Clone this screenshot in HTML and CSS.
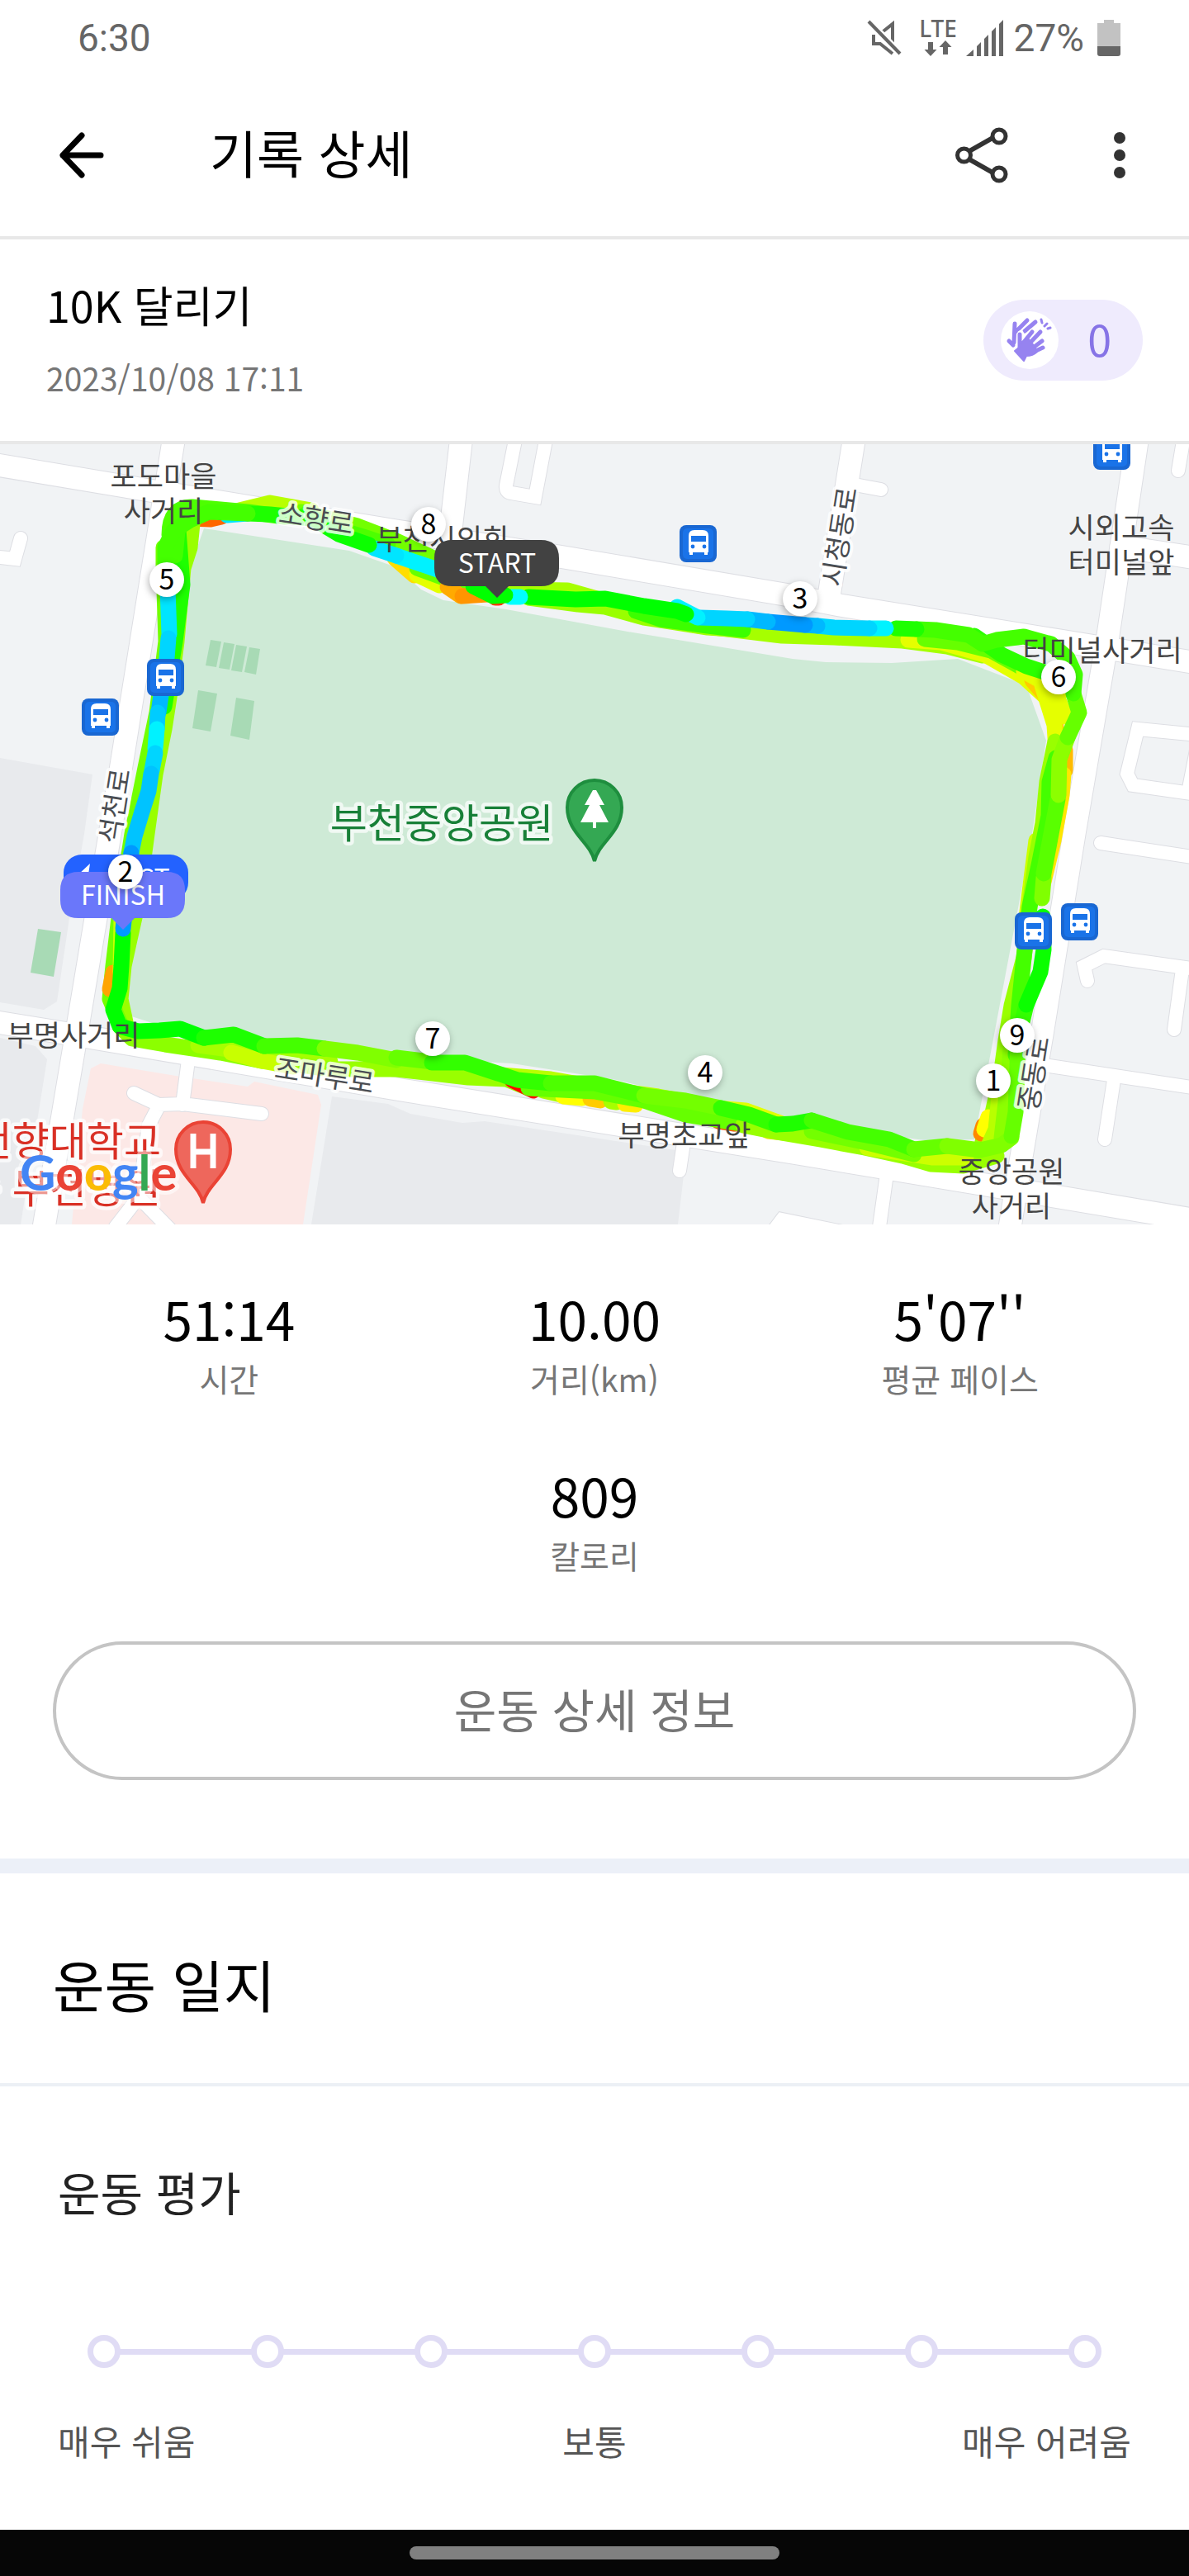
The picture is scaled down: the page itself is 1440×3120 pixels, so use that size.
FILE: index.html
```html
<!DOCTYPE html>
<html lang="ko">
<head>
    <meta charset="UTF-8">
    <meta name="viewport" content="width=device-width, initial-scale=1.0">
    <title>기록 상세</title>
    <link rel="stylesheet" href="styles.css">
</head>
<body>
    <div class="status-bar">
        <span class="status-time">6:30</span>
        <div class="status-icons">
            <svg class="icon-mute" width="42" height="44" viewBox="0 0 42 44" fill="none" stroke="#666" stroke-width="4">
                <path d="M19 14.500L31 5V30L16 15M8 18V29H16L31 41"/>
                <path d="M2 2L40 41" stroke="#fff" stroke-width="9"/>
                <path d="M2 2L40 41"/>
            </svg>
            <svg class="icon-lte" width="46" height="46" viewBox="0 0 46 46" fill="#666">
                <text class="lte-text" x="23" y="22" text-anchor="middle">LTE</text>
                <path d="M11 28H17V37H21.500L14 45L6.500 37H11ZM29 43V34H24.500L32 26L39.500 34H35V43Z"/>
            </svg>
            <svg class="icon-signal" width="46" height="44" viewBox="0 0 46 44" fill="#666">
                <path d="M0 44L9 36V44ZM13 44V32L18 27V44ZM22 44V23L27 18V44ZM31 44V14L36 9V44ZM40 44V5L45 0V44Z"/>
            </svg>
            <span class="status-battery">27%</span>
            <svg width="28" height="44" viewBox="0 0 28 44">
                <path d="M8 0H20V4H28V32H0V4H8Z" fill="#c2c2c2"/>
                <path d="M0 32H28V41Q28 44 25 44H3Q0 44 0 41Z" fill="#666"/>
            </svg>
        </div>
    </div>

    <header class="app-bar">
        <button class="icon-button" type="button" aria-label="뒤로">
            <svg width="54" height="56" viewBox="0 0 54 56" fill="none" stroke="#000" stroke-width="7" stroke-linecap="round" stroke-linejoin="round">
                <path d="M27 4L4 28L27 52M4 28H50"/>
            </svg>
        </button>
        <h1>기록 상세</h1>
        <button class="icon-button" type="button" aria-label="공유">
            <svg width="64" height="68" viewBox="0 0 64 68" fill="none" stroke="#333" stroke-width="5">
                <path d="M17 29L47 12M17 39L47 56" stroke-width="6"/>
                <circle cx="10.500" cy="34" r="8"/>
                <circle cx="53" cy="11" r="8"/>
                <circle cx="53" cy="57" r="8"/>
            </svg>
        </button>
        <button class="icon-button more" type="button" aria-label="더보기">
            <svg width="14" height="56" viewBox="0 0 14 56" fill="#333">
                <circle cx="7" cy="7" r="7"/>
                <circle cx="7" cy="28" r="7"/>
                <circle cx="7" cy="49" r="7"/>
            </svg>
        </button>
    </header>

    <main>
        <section class="summary">
            <div>
                <h2>10K 달리기</h2>
                <p>2023/10/08 17:11</p>
            </div>
            <button class="clap" type="button">
                <span class="clap-icon">
                    <svg width="70" height="70" viewBox="0 0 70 70" fill="none" stroke="#9683f0" stroke-linecap="round" stroke-linejoin="round">
                        <path d="M17 15L16 38M10 36L15 41M19 24L32 11M29 24L42 13" stroke-width="5"/>
                        <path d="M49 10L50 14M56 15L53 18M60 20L57 21" stroke-width="3"/>
                        <path d="M24 27L23 44L18 48L28 59L32 54Q42 54 47 49L51 44L45 47L50 36L42 38L48 25L36 34L38 25L27 38Z" fill="#9683f0" stroke="#fff" stroke-width="8"/>
                        <path d="M23 28V46M24 42L38 25M30 44L48 25M34 48L50 36M36 51L51 44" stroke-width="5"/>
                        <path d="M24 40L33 33L42 44L44 49Q39 54 31 54L28 60L17 48L22 44Z" fill="#9683f0" stroke-width="2"/>
                    </svg>
                </span>
                <span>0</span>
            </button>
        </section>

        <svg class="map" viewBox="0 0 1440 945" role="img" aria-label="달리기 경로 지도">
            <defs>
                <g id="bus">
                    <rect width="45" height="45" rx="8" fill="#1967d2"/>
                    <rect x="4" y="4" width="37" height="37" rx="5" fill="#1a73e8"/>
                    <path d="M11 13Q11 6 18 6H28Q35 6 35 13V33H34V36H30V33H16V36H12V33H11Z" fill="#fff"/>
                    <path d="M14 13H32V20H14Z" fill="#1a73e8"/>
                    <circle cx="16" cy="26" r="2.400" fill="#1a73e8"/>
                    <circle cx="30" cy="26" r="2.400" fill="#1a73e8"/>
                </g>
                <g id="roads">
                    <path class="wide" d="M-10 24L187 57L480 105L677 136L950 182L1017 195L1327 245L1450 265"/>
                    <path class="wide" d="M211 -10L198 71L147 389L95 700L52 955"/>
                    <path class="wide" d="M-10 699L95 716L480 781L960 858L1230 903L1450 940"/>
                    <path class="wide" d="M1035 -10L1003 190"/>
                    <path class="wide" d="M1378 -10L1341 238L1301 472L1262 715L1232 893L1222 955"/>
                    <path class="wide" d="M1358 124L1450 138"/>
                    <path class="wide" d="M559 -10L545 112"/>
                    <path class="narrow" d="M1035 49L1067 55M1434 -10L1427 32M1333 483L1450 501M1317 650L1313 632L1337 620L1450 636M1432 636L1422 709M1264 752L1450 780M1349 770L1338 842M1074 884L1064 955M828 846L823 880M25 114L18 139L-10 136M625 -10L613 50Q612 58 619 59L648 64L662 -10M1450 352L1378 345L1365 399L1372 413L1450 424M1453 350L1439 422M935 955L947 939L1020 954"/>
                    <path class="narrow" d="M228 746L221 800M162 786L192 800L221 799L317 811M192 802L180 825L168 912L140 948M168 912L207 952"/>
                </g>
            </defs>

            <rect width="1440" height="945" fill="#f1f3f5"/>

            <!-- blocks -->
            <g fill="#e8eaed">
                <path d="M0 380L112 400L102 472L84 574L69 675L53 685L0 676Z"/>
                <path d="M0 719L43 729L57 745L25 945H0Z"/>
                <path d="M402 790L470 799L497 811L560 822L587 820L818 855L828 885L821 945H377Z"/>
            </g>
            <path d="M110 756L122 750L213 765L300 778L308 772L385 788L389 800L367 945H87L100 805Z" fill="#fce8e6"/>

            <use href="#roads" class="road-edge"/>
            <use href="#roads" class="road"/>

            <!-- park -->
            <path d="M247 102L423 129L480 149L510 176L537 189L613 200L760 227L960 260L1000 264L1080 265L1160 260L1243 292L1267 359L1250 472L1180 842L1127 844L960 822L747 770L620 750L480 742L200 706L150 690L165 520L205 330L230 150Z" fill="#ceead6"/>
            <g fill="#a8dab5">
                <path d="M255 237L268 239L262 270L249 268ZM271 240L284 242L278 273L265 271ZM286 243L299 245L293 276L280 274ZM302 246L315 248L310 279L296 276Z"/>
                <path d="M240 298L263 302L255 348L233 344ZM286 307L308 311L302 358L279 353ZM46 587L74 591L65 645L37 640Z"/>
            </g>

            <!-- route, older laps first -->
            <g class="route">
                <path stroke="#ff6600" d="M230 90L255 91L268 88"/>
                <path stroke="#00e5ff" d="M275 86L300 84"/>
                <path stroke="#99ff00" d="M233 96L230 125L222 150L214 239L206 300L199 345L188 400L178 472L166 560L157 600L150 632L146 672L152 700"/>
                <path stroke="#73ff00" d="M198 125L198 145L201 239L190 325L176 392L160 472L144 574L137 632L133 672L145 700"/>
                <path stroke="#ffa500" d="M137 640L133 660"/>
                <path stroke="#ccff00" d="M147 574L146 640"/>
                <path stroke="#1eff00" d="M215 90L221 170L212 239L199 318"/>
                <path stroke="#44ff00" d="M216 95L212 135"/>
                <path stroke="#b8ff00" d="M290 80L327 71L377 80"/>
                <path stroke="#4dff00" d="M205 110Q205 75 233 76L300 82L345 88"/>
                <path stroke="#73ff00" d="M365 82L433 99L480 117L523 137L573 162"/>
                <path stroke="#4dff00" d="M370 85L400 100L440 112L470 122"/>
                <path stroke="#ffdd00" d="M478 138L502 159"/>
                <path stroke="#e5ff00" d="M505 158L532 171"/>
                <path stroke="#66ff00" d="M505 150L560 170"/>
                <path stroke="#ffaa00" d="M542 173L558 184"/>
                <path stroke="#ff9500" d="M560 184L590 182"/>
                <path stroke="#ff3300" d="M600 186L604 186"/>
                <path stroke="#a6ff00" d="M590 179L630 176L687 177L740 192"/>
                <path stroke="#99ff00" d="M640 186L700 194L733 197L780 210L857 222L900 225"/>
                <path stroke="#a6ff00" d="M840 219L947 232L1010 234L1093 238L1147 245L1190 256"/>
                <path stroke="#e5ff00" d="M1100 237L1140 240L1193 255L1240 282L1265 305"/>
                <path stroke="#66ff00" d="M1120 236L1160 240L1200 250L1240 272"/>
                <path stroke="#3cff00" d="M770 202L800 212L857 220L900 225"/>
                <path stroke="#ffcc00" d="M1250 286L1275 315L1280 350"/>
                <path stroke="#e5ff00" d="M1262 292L1277 340L1279 370M1278 300L1290 330M1240 275L1285 300"/>
                <path stroke="#ffbb00" d="M1290 370L1290 395"/>
                <path stroke="#ffe600" d="M1288 400L1286 425L1276 480L1264 530"/>
                <path stroke="#ccff00" d="M1255 480L1246 550L1240 600"/>
                <path stroke="#99ff00" d="M1278 360L1268 409L1263 459L1255 500L1247 560L1240 622L1225 680L1218 722L1212 765L1202 810L1190 845"/>
                <path stroke="#ff8800" d="M1191 825L1188 835"/>
                <path stroke="#ffff00" d="M1197 815L1192 830"/>
                <path stroke="#b8ff00" d="M1213 760L1206 830L1197 850"/>
                <path stroke="#8cff00" d="M1225 720L1220 780L1213 840"/>
                <path stroke="#44ff00" d="M1279 380L1271 409L1270 450L1258 510L1247 560L1240 622L1234 680L1230 740"/>
                <path stroke="#8cff00" d="M145 705L160 720L200 727L267 737L317 747"/>
                <path stroke="#a6ff00" d="M240 728L300 736L400 748"/>
                <path stroke="#c8ff00" d="M280 737L317 747L355 754"/>
                <path stroke="#99ff00" d="M350 750L400 757L480 757L567 767L613 769L640 780"/>
                <path stroke="#ff0000" d="M620 770L646 783"/>
                <path stroke="#a6ff00" d="M658 783L680 788"/>
                <path stroke="#ffff00" d="M682 790L705 792"/>
                <path stroke="#ffcc00" d="M715 793L727 795"/>
                <path stroke="#a6ff00" d="M740 796L747 797"/>
                <path stroke="#ffee00" d="M757 799L770 800"/>
                <path stroke="#b8ff00" d="M607 764L667 769L747 783L797 790L850 800"/>
                <path stroke="#e1ff00" d="M830 801L903 807L947 823"/>
                <path stroke="#ff5500" d="M870 820L890 823"/>
                <path stroke="#ffdd00" d="M930 832L970 836"/>
                <path stroke="#66ff00" d="M640 780L720 784L780 795L830 812L880 820L940 830"/>
                <path stroke="#99ff00" d="M900 825L940 833L993 842L1047 852L1093 862L1127 872L1167 874L1207 862"/>
                <path stroke="#ccff00" d="M1050 852L1130 864L1170 864"/>
                <path stroke="#73ff00" d="M983 832L1050 846L1107 860"/>

                <!-- latest lap -->
                <path stroke="#00ff00" d="M149 592L147 632L145 659L137 685L145 705L167 711L193 710L218 708L247 719"/>
                <path stroke="#1eff00" d="M247 719L283 715L320 729"/>
                <path stroke="#44ff00" d="M320 729L360 728L393 732"/>
                <path stroke="#80ff00" d="M393 732L433 737L480 746"/>
                <path stroke="#66ff00" d="M480 743L523 748"/>
                <path stroke="#33ff00" d="M523 749L563 749L627 770L667 774"/>
                <path stroke="#4dff00" d="M667 774L720 774L780 789"/>
                <path stroke="#73ff00" d="M780 789L830 795L873 804"/>
                <path stroke="#33ff00" d="M873 804L907 812L940 824"/>
                <path stroke="#1eff00" d="M940 824L960 823L983 819"/>
                <path stroke="#44ff00" d="M983 819L1027 833L1077 842L1107 854"/>
                <path stroke="#66ff00" d="M1107 854L1147 850"/>
                <path stroke="#80ff00" d="M1147 850L1187 855L1213 849L1225 840"/>
                <path stroke="#66ff00" d="M1225 838L1230 809L1232 755L1233 720"/>
                <path stroke="#33ff00" d="M1233 720L1243 679"/>
                <path stroke="#0bff00" d="M1243 679L1260 639L1264 612L1263 572"/>
                <path stroke="#80ff00" d="M1262 550L1264 525"/>
                <path stroke="#59ff00" d="M1264 520L1273 472L1281 430"/>
                <path stroke="#8cff00" d="M1282 425L1283 382L1293 355"/>
                <path stroke="#66ff00" d="M1293 355L1307 325L1300 302"/>
                <path stroke="#2bff00" d="M1180 232L1213 255L1243 269L1277 280"/>
                <path stroke="#44ff00" d="M1300 302L1302 279L1293 259L1273 242L1240 233L1207 237L1190 242L1173 231L1133 225L1110 224"/>
                <path stroke="#1eff00" d="M1110 224L1085 223"/>
                <path stroke="#00f2ff" d="M1073 223L1053 223"/>
                <path stroke="#00d5ff" d="M1053 223L1010 222L990 220"/>
                <path stroke="#00b8ff" d="M990 220L975 219"/>
                <path stroke="#0099ff" d="M975 219L953 217L930 215"/>
                <path stroke="#00b8ff" d="M930 215L905 212"/>
                <path stroke="#00d5ff" d="M905 212L880 211L847 210"/>
                <path stroke="#00f2ff" d="M845 210L820 197"/>
                <path stroke="#00ff00" d="M831 206L820 202L780 196L733 187L697 188L640 185"/>
                <path stroke="#00ffff" d="M630 185L618 185"/>
                <path stroke="#00ff00" d="M612 183L597 184L573 172"/>
                <path stroke="#00f2ff" d="M530 152L480 135"/>
                <path stroke="#00e5ff" d="M480 135L453 126"/>
                <path stroke="#0bff00" d="M447 122L410 109L377 89"/>
                <path stroke="#1eff00" d="M377 90L327 85L300 84"/>
                <path stroke="#44ff00" d="M300 84L253 82L230 92L210 105L200 125L200 150"/>
                <path stroke="#00e5ff" d="M203 175L205 230"/>
                <path stroke="#00d5ff" d="M204 235L202 259L197 290"/>
                <path stroke="#00b8ff" d="M197 290L192 325"/>
                <path stroke="#00ccff" d="M191 325L190 345"/>
                <path stroke="#00f2ff" d="M190 345L188 369"/>
                <path stroke="#00d5ff" d="M188 374L184 395"/>
                <path stroke="#00c3ff" d="M183 399L180 420L172 445L163 475L159 495"/>
                <path stroke="#0099ff" d="M159 495L149 587"/>
            </g>

            <use href="#bus" x="1324" y="-14"/>
            <use href="#bus" x="823" y="98"/>
            <use href="#bus" x="178" y="260"/>
            <use href="#bus" x="99" y="308"/>
            <use href="#bus" x="1229" y="567"/>
            <use href="#bus" x="1285" y="556"/>

            <!-- place names -->
            <g class="place">
                <text x="198" y="52">포도마을</text>
                <text x="198" y="94">사거리</text>
                <text x="536" y="128">부천시의회</text>
                <text x="1358" y="114">시외고속</text>
                <text x="1358" y="156">터미널앞</text>
                <text x="1335" y="263">터미널사거리</text>
                <text x="89" y="729">부명사거리</text>
                <text x="829" y="850">부명초교앞</text>
                <text x="1225" y="894">중앙공원</text>
                <text x="1225" y="936">사거리</text>
            </g>
            <g class="street">
                <text transform="translate(383 90) rotate(9)" dy="12">소향로</text>
                <text transform="translate(393 765) rotate(9)" dy="12">조마루로</text>
                <text transform="translate(139 438) rotate(-81)" dy="12">석천로</text>
                <text transform="translate(1017 112) rotate(-81)" dy="12">시청동로</text>
                <text transform="translate(1252 762) rotate(-81)" dy="12">중동로</text>
            </g>
            <text class="poi park" x="535" y="477">부천중앙공원</text>
            <text class="poi hospital" x="195" y="862">순천향대학교</text>
            <text class="poi hospital" x="195" y="919">부속 부천병원</text>

            <path d="M720 505C715 482 687 471 687 440A33 33 0 0 1 753 440C753 471 725 482 720 505Z" fill="#34a853" stroke="#1e8e3e" stroke-width="4"/>
            <path d="M718 419H722L732 437H726L737 458H722V465H718V458H703L714 437H708Z" fill="#fff"/>
            <path d="M246 919C241 896 213 885 213 854A33 33 0 0 1 279 854C279 885 251 896 246 919Z" fill="#ee675c" stroke="#ea4335" stroke-width="4"/>
            <path d="M234 835V877M258 835V877M234 857H258" stroke="#fff" stroke-width="7"/>

            <text class="google" x="24" y="904"><tspan fill="#4285f4">G</tspan><tspan fill="#ea4335">o</tspan><tspan fill="#fbbc04">o</tspan><tspan fill="#4285f4">g</tspan><tspan fill="#34a853">l</tspan><tspan fill="#ea4335">e</tspan></text>

            <!-- kilometre markers -->
            <g class="marker">
                <circle cx="202" cy="164" r="21"/><text x="202" y="176">5</text>
                <circle cx="519" cy="97" r="21"/><text x="519" y="109">8</text>
                <circle cx="969" cy="187" r="21"/><text x="969" y="199">3</text>
                <circle cx="1282" cy="282" r="21"/><text x="1282" y="294">6</text>
                <circle cx="1232" cy="716" r="21"/><text x="1232" y="728">9</text>
                <circle cx="1203" cy="771" r="21"/><text x="1203" y="783">1</text>
                <circle cx="524" cy="720" r="21"/><text x="524" y="732">7</text>
                <circle cx="854" cy="761" r="21"/><text x="854" y="773">4</text>
            </g>
            <g class="bubble">
                <path d="M548 116H655Q677 116 677 138V150Q677 172 655 172H616L602 186L588 172H548Q526 172 526 150V138Q526 116 548 116Z" fill="#424242"/>
                <text x="602" y="156">START</text>
                <rect x="77" y="497" width="151" height="56" rx="22" fill="#2362ff"/>
                <path d="M109 508L94 522H101L96 537L111 521H107Z" fill="#fff"/>
                <text x="167" y="538">BEST</text>
                <path d="M95 518H202Q224 518 224 540V552Q224 574 202 574H163L149 588L135 574H95Q73 574 73 552V540Q73 518 95 518Z" fill="#6a77fa"/>
                <text x="149" y="558">FINISH</text>
            </g>
            <g class="marker">
                <circle cx="152" cy="518" r="21"/><text x="152" y="530">2</text>
            </g>
        </svg>

        <section class="stats">
            <div class="stat">
                <strong>51:14</strong>
                <span>시간</span>
            </div>
            <div class="stat">
                <strong>10.00</strong>
                <span>거리(km)</span>
            </div>
            <div class="stat">
                <strong>5'07''</strong>
                <span>평균 페이스</span>
            </div>
            <div class="stat">
                <strong>809</strong>
                <span>칼로리</span>
            </div>
        </section>

        <button class="detail-button" type="button">운동 상세 정보</button>

        <section class="journal">
            <h2>운동 일지</h2>
            <div class="rating">
                <h3 id="ratingTitle">운동 평가</h3>
                <div class="rating-scale" role="radiogroup" aria-labelledby="ratingTitle">
                    <input type="radio" name="rating" id="rate1" value="1">
                    <input type="radio" name="rating" id="rate2" value="2" aria-label="2">
                    <input type="radio" name="rating" id="rate3" value="3" aria-label="3">
                    <input type="radio" name="rating" id="rate4" value="4">
                    <input type="radio" name="rating" id="rate5" value="5" aria-label="5">
                    <input type="radio" name="rating" id="rate6" value="6" aria-label="6">
                    <input type="radio" name="rating" id="rate7" value="7">
                </div>
                <div class="rating-labels">
                    <label for="rate1">매우 쉬움</label>
                    <label for="rate4">보통</label>
                    <label for="rate7">매우 어려움</label>
                </div>
            </div>
        </section>
    </main>

    <footer class="nav-bar">
        <div class="nav-handle"></div>
    </footer>
</body>
</html>
```
FILE: styles.css
```css
:root {
    --text-color: #000;
    --muted-color: #767676;
    --line-color: #e8e8e8;
    --accent-color: #8673e6;
    --accent-soft: #efebfd;
    --scale-color: #e0dcf5;
}

* {
    margin: 0;
    padding: 0;
    box-sizing: border-box;
}

body {
    font-family: 'Noto Sans CJK KR', sans-serif;
    color: var(--text-color);
    background-color: #fff;
    display: flex;
    flex-direction: column;
    min-height: 100vh;
}

h1, h2, h3 {
    font-weight: normal;
}

button {
    font-family: inherit;
    border: none;
    background: none;
    cursor: pointer;
}

svg {
    display: block;
}

/* status bar */
.status-bar {
    display: flex;
    align-items: center;
    justify-content: space-between;
    height: 90px;
    padding: 2px 83px 0 94px;
    font-family: Roboto, sans-serif;
    font-size: 46px;
    color: #666;
}

.status-icons {
    display: flex;
    align-items: center;
}

.icon-lte {
    margin: 0 11px 0 21px;
}

.icon-signal {
    margin-right: 12px;
}

.status-battery {
    margin-right: 16px;
}

.lte-text {
    font-family: 'Noto Sans', sans-serif;
    font-size: 28px;
    font-weight: 500;
}

/* app bar */
.app-bar {
    display: flex;
    align-items: center;
    height: 200px;
    padding: 0 77px 0 72px;
    border-bottom: 4px solid var(--line-color);
}

.app-bar h1 {
    flex-grow: 1;
    margin-left: 128px;
    padding-bottom: 8px;
    font-size: 62px;
    line-height: 92px;
}

.icon-button.more {
    margin-left: 128px;
}

/* summary */
.summary {
    display: flex;
    align-items: center;
    justify-content: space-between;
    height: 248px;
    padding: 0 56px;
    border-bottom: 4px solid var(--line-color);
}

.summary h2 {
    font-size: 52px;
    line-height: 80px;
    margin-bottom: 18px;
}

.summary p {
    padding-bottom: 8px;
    font-size: 39px;
    line-height: 60px;
    color: var(--muted-color);
}

.clap {
    display: flex;
    align-items: center;
    gap: 35px;
    height: 98px;
    padding: 0 38px 0 21px;
    border-radius: 49px;
    background-color: var(--accent-soft);
    color: var(--accent-color);
    font-size: 52px;
    line-height: 76px;
}

.clap span:last-child {
    padding-bottom: 4px;
}

.clap-icon {
    border-radius: 50%;
    background-color: #fff;
}

/* map */
.map {
    width: 100%;
    height: auto;
}

.road-edge {
    --wide: 29px;
    --narrow: 18px;
    fill: none;
    stroke: #dddee3;
    stroke-linecap: round;
}

.road {
    --wide: 27px;
    --narrow: 16px;
    fill: none;
    stroke: #fff;
    stroke-linecap: round;
}

.wide {
    stroke-width: var(--wide);
}

.narrow {
    stroke-width: var(--narrow);
}

.route {
    fill: none;
    stroke-width: 19px;
    stroke-linecap: round;
    stroke-linejoin: round;
}

.map text {
    text-anchor: middle;
    paint-order: stroke;
    stroke-linejoin: round;
}

.map .place {
    font-size: 35px;
    fill: #444;
}

.map .street {
    font-size: 33px;
    fill: #4a4d52;
    stroke: rgba(255, 255, 255, 0.8);
    stroke-width: 8px;
}

.map .poi {
    font-size: 49px;
    stroke: rgba(255, 255, 255, 0.7);
    stroke-width: 9px;
}

.map .park {
    fill: #188038;
}

.map .hospital {
    fill: #d93025;
    text-anchor: end;
}

.map .google {
    font-family: Lato, sans-serif;
    font-size: 60px;
    font-weight: bold;
    text-anchor: start;
    stroke: rgba(255, 255, 255, 0.5);
    stroke-width: 10px;
}

.marker {
    font-size: 34px;
}

.marker circle {
    fill: #fff;
    filter: drop-shadow(-1px 3px 4px rgba(0, 0, 0, 0.3));
}

.bubble {
    font-size: 32px;
}

.bubble text {
    fill: #fff;
}

/* stats */
.stats {
    display: flex;
    flex-wrap: wrap;
    justify-content: center;
    row-gap: 68px;
    padding: 68px 56px 77px;
}

.stat {
    display: flex;
    flex-direction: column;
    align-items: center;
    width: 33.333%;
}

.stat strong {
    font-size: 64px;
    font-weight: normal;
    line-height: 90px;
}

.stat span {
    font-size: 39px;
    line-height: 56px;
    color: var(--muted-color);
}

.detail-button {
    display: block;
    width: calc(100% - 128px);
    height: 168px;
    margin: 0 64px 95px;
    padding-bottom: 8px;
    border: 4px solid #c4c4c4;
    border-radius: 84px;
    font-size: 56px;
    color: var(--muted-color);
}

/* journal */
.journal {
    border-top: 18px solid #ecf0f8;
}

.journal h2 {
    padding: 84px 64px 70px;
    border-bottom: 4px solid #ecf0f5;
    font-size: 68px;
    line-height: 100px;
}

.rating {
    padding: 87px 70px 78px;
}

.rating h3 {
    font-size: 56px;
    line-height: 80px;
    color: #222;
}

.rating-scale {
    display: flex;
    justify-content: space-between;
    margin: 134px 36px 58px;
    background: linear-gradient(var(--scale-color), var(--scale-color)) center / calc(100% - 40px) 7px no-repeat;
}

.rating-scale input {
    appearance: none;
    width: 40px;
    height: 40px;
    border: 7px solid var(--scale-color);
    border-radius: 50%;
    background-color: #fff;
    cursor: pointer;
}

.rating-scale input:checked {
    background-color: var(--accent-color);
}

.rating-labels {
    display: grid;
    grid-template-columns: 1fr 1fr 1fr;
    font-size: 42px;
    line-height: 60px;
    color: #555;
}

.rating-labels label:nth-child(2) {
    text-align: center;
}

.rating-labels label:nth-child(3) {
    text-align: right;
}

/* system navigation */
.nav-bar {
    display: flex;
    align-items: center;
    justify-content: center;
    height: 56px;
    margin-top: auto;
    background-color: #060606;
}

.nav-handle {
    width: 448px;
    height: 16px;
    border-radius: 8px;
    background-color: #808080;
}
```
